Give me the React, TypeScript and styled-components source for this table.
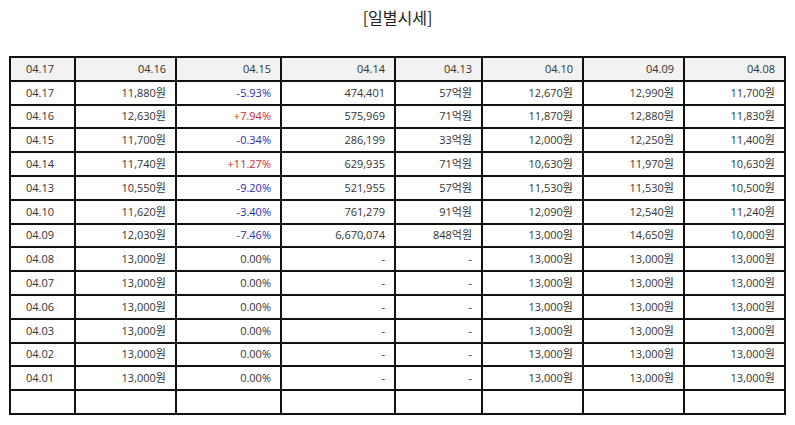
import { styled, createGlobalStyle } from 'styled-components';

type Tone = 'up' | 'down' | 'flat';

type DailyRow = {
  date: string;
  close: string;
  rate: string;
  tone: Tone;
  volume: string;
  amount: string;
  open: string;
  high: string;
  low: string;
};

const HEADERS = ['04.17', '04.16', '04.15', '04.14', '04.13', '04.10', '04.09', '04.08'];

const flat = (date: string): DailyRow => ({
  date,
  close: '13,000원',
  rate: '0.00%',
  tone: 'flat',
  volume: '-',
  amount: '-',
  open: '13,000원',
  high: '13,000원',
  low: '13,000원',
});

const ROWS: DailyRow[] = [
  { date: '04.17', close: '11,880원', rate: '-5.93%', tone: 'down', volume: '474,401', amount: '57억원', open: '12,670원', high: '12,990원', low: '11,700원' },
  { date: '04.16', close: '12,630원', rate: '+7.94%', tone: 'up', volume: '575,969', amount: '71억원', open: '11,870원', high: '12,880원', low: '11,830원' },
  { date: '04.15', close: '11,700원', rate: '-0.34%', tone: 'down', volume: '286,199', amount: '33억원', open: '12,000원', high: '12,250원', low: '11,400원' },
  { date: '04.14', close: '11,740원', rate: '+11.27%', tone: 'up', volume: '629,935', amount: '71억원', open: '10,630원', high: '11,970원', low: '10,630원' },
  { date: '04.13', close: '10,550원', rate: '-9.20%', tone: 'down', volume: '521,955', amount: '57억원', open: '11,530원', high: '11,530원', low: '10,500원' },
  { date: '04.10', close: '11,620원', rate: '-3.40%', tone: 'down', volume: '761,279', amount: '91억원', open: '12,090원', high: '12,540원', low: '11,240원' },
  { date: '04.09', close: '12,030원', rate: '-7.46%', tone: 'down', volume: '6,670,074', amount: '848억원', open: '13,000원', high: '14,650원', low: '10,000원' },
  flat('04.08'),
  flat('04.07'),
  flat('04.06'),
  flat('04.03'),
  flat('04.02'),
  flat('04.01'),
];

const WIDTHS = [65, 101, 105, 114, 87, 101, 101, 101];

const GlobalStyle = createGlobalStyle`
  html, body {
    margin: 0;
    padding: 0;
    background: #fff;
  }
  body {
    font-family: "Open Sans", "Noto Sans CJK KR", sans-serif;
    color: #333;
  }
`;

const App = () => {
  return (
    <>
      <GlobalStyle />
      <SPage>
        <STitle>[일별시세]</STitle>
        <STable>
          <colgroup>
            {WIDTHS.map((w, i) => (
              <col key={i} style={{ width: w }} />
            ))}
          </colgroup>
          <thead>
            <tr>
              {HEADERS.map((h, i) => (
                <SHeadCell key={h} $center={i === 0}>
                  {h}
                </SHeadCell>
              ))}
            </tr>
          </thead>
          <tbody>
            {ROWS.map(row => (
              <tr key={row.date}>
                <SCell $center>{row.date}</SCell>
                <SCell>{row.close}</SCell>
                <SCell $tone={row.tone}>{row.rate}</SCell>
                <SCell>{row.volume}</SCell>
                <SCell>{row.amount}</SCell>
                <SCell>{row.open}</SCell>
                <SCell>{row.high}</SCell>
                <SCell>{row.low}</SCell>
              </tr>
            ))}
            <tr>
              {HEADERS.map(h => (
                <SCell key={h} />
              ))}
            </tr>
          </tbody>
        </STable>
      </SPage>
    </>
  );
};

const SPage = styled.div`
  width: 795px;
  padding: 0 9px;
  box-sizing: border-box;
`;

const STitle = styled.h2`
  margin: 0;
  height: 56px;
  padding-top: 6px;
  box-sizing: border-box;
  text-align: center;
  font-family: "Noto Sans CJK KR", sans-serif;
  font-size: 16px;
  font-weight: 400;
  line-height: 22px;
  color: #222;
`;

const STable = styled.table`
  width: 777px;
  table-layout: fixed;
  border-collapse: collapse;
  font-size: 11px;

  tr {
    height: 23.8px;
  }
`;

const toneColor = (tone?: Tone) => {
  if (tone === 'up') return '#d8232a';
  if (tone === 'down') return '#2a2ab8';
  return '#333';
};

const SCell = styled.td<{ $center?: boolean; $tone?: Tone }>`
  border: 2px solid #111;
  padding: 0 9px 0 4px;
  text-align: ${props => (props.$center ? 'center' : 'right')};
  color: ${props => toneColor(props.$tone)};
  white-space: nowrap;
  line-height: 14px;
`;

const SHeadCell = styled.th<{ $center?: boolean }>`
  border: 2px solid #111;
  padding: 0 9px 0 4px;
  background: #f2f2f2;
  font-weight: 400;
  text-align: ${props => (props.$center ? 'center' : 'right')};
  color: #333;
  line-height: 14px;
`;

export default App;
